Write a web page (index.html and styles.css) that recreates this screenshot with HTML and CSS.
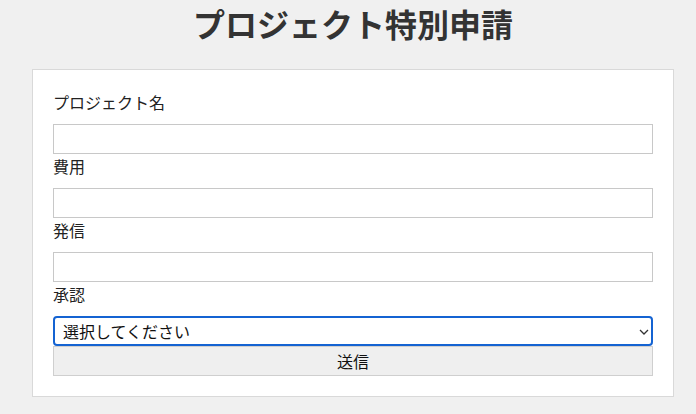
FILE: index.html
```html
<!DOCTYPE html>
<html lang="ja">
<head>
<meta charset="utf-8">
<title>プロジェクト特別申請</title>
<link rel="stylesheet" href="styles.css">
</head>
<body>
<div class="page">
  <h1 class="title">プロジェクト特別申請</h1>
  <form class="card">
    <label class="label" for="name">プロジェクト名</label>
    <input class="field" id="name" type="text">
    <label class="label" for="cost">費用</label>
    <input class="field" id="cost" type="text">
    <label class="label" for="from">発信</label>
    <input class="field" id="from" type="text">
    <label class="label" for="approve">承認</label>
    <div class="select-wrap">
      <select class="select" id="approve">
        <option>選択してください</option>
      </select>
      <svg class="chevron" width="10" height="6" viewBox="0 0 10 6"><path d="M1 1 L5 5 L9 1" fill="none" stroke="#333" stroke-width="1.3"/></svg>
    </div>
    <button class="submit" type="button">送信</button>
  </form>
</div>
</body>
</html>
```
FILE: styles.css
```css
* { box-sizing: border-box; }
html, body {
  margin: 0;
  padding: 0;
  background: #f0f0f0;
}
body {
  font-family: "Noto Sans CJK JP", "Noto Sans", sans-serif;
  color: #222;
}
.page {
  width: 642px;
  margin-left: 32px;
}
.title {
  margin: 0 0 23px;
  font-size: 32px;
  line-height: 46px;
  font-weight: 700;
  color: #333;
  text-align: center;
}
.card {
  display: flex;
  flex-direction: column;
  background: #fff;
  border: 1px solid #d9d9d9;
  padding: 20px;
}
.label {
  display: block;
  font-size: 16px;
  line-height: 24px;
  margin-bottom: 10px;
  color: #222;
}
.field {
  display: block;
  width: 100%;
  height: 30px;
  margin: 0;
  border: 1px solid #c8c8c8;
  border-radius: 0;
  background: #fff;
  font-size: 16px;
  font-family: inherit;
  padding: 0 8px;
}
.select-wrap {
  position: relative;
  height: 30px;
}
.select {
  appearance: none;
  -webkit-appearance: none;
  width: 100%;
  height: 30px;
  margin: 0;
  border: 2px solid #1463d2;
  border-radius: 4px;
  background: #fff;
  font-family: inherit;
  font-size: 16px;
  color: #111;
  padding: 0 8px;
  line-height: 26px;
  outline: none;
}
.chevron {
  position: absolute;
  right: 4px;
  top: 13px;
  pointer-events: none;
}
.submit {
  display: block;
  width: 100%;
  height: 30px;
  margin: 0;
  border: 1px solid #cfcfcf;
  border-radius: 0;
  background: #efefef;
  font-family: inherit;
  font-size: 16px;
  color: #111;
  padding: 0;
}
```
